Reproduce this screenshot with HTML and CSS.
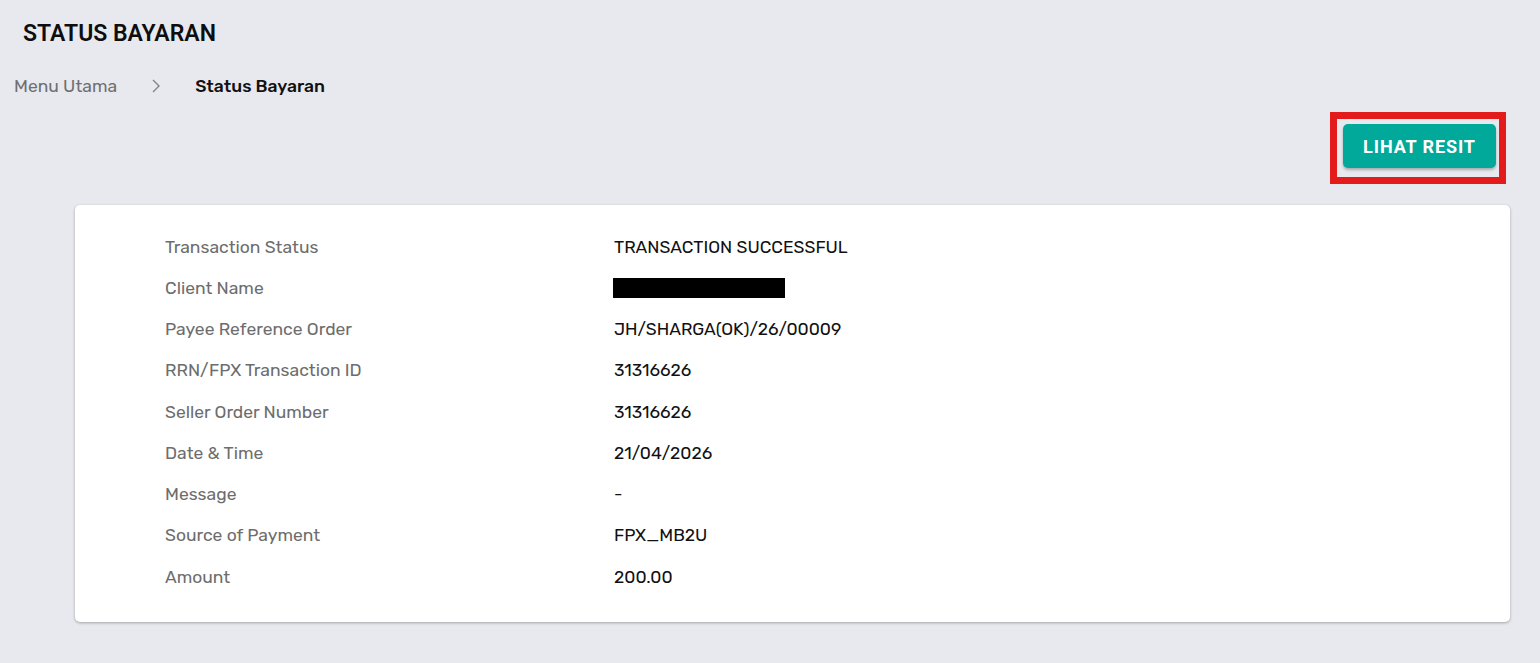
FILE: index.html
```html
<!DOCTYPE html>
<html lang="ms">
<head>
<meta charset="utf-8">
<title>Status Bayaran</title>
<link rel="stylesheet" href="styles.css">
</head>
<body>
<div class="page">
  <h1 class="title">STATUS BAYARAN</h1>
  <nav class="crumbs">
    <span class="crumb-link">Menu Utama</span>
    <svg class="chev" width="12" height="16" viewBox="0 0 12 16"><path d="M3 2 L9 8 L3 14" fill="none" stroke="#80858c" stroke-width="1.4"/></svg>
    <span class="crumb-current">Status Bayaran</span>
  </nav>
  <div class="actions">
    <div class="highlight">
      <button class="btn">LIHAT RESIT</button>
    </div>
  </div>
  <section class="card">
    <dl class="details">
      <dt>Transaction Status</dt><dd>TRANSACTION SUCCESSFUL</dd>
      <dt>Client Name</dt><dd><span class="redact"></span></dd>
      <dt>Payee Reference Order</dt><dd>JH/SHARGA(OK)/26/00009</dd>
      <dt>RRN/FPX Transaction ID</dt><dd>31316626</dd>
      <dt>Seller Order Number</dt><dd>31316626</dd>
      <dt>Date &amp; Time</dt><dd>21/04/2026</dd>
      <dt>Message</dt><dd>-</dd>
      <dt>Source of Payment</dt><dd>FPX_MB2U</dd>
      <dt>Amount</dt><dd>200.00</dd>
    </dl>
  </section>
</div>
</body>
</html>
```

FILE: styles.css
```css
html, body {
  margin: 0;
  padding: 0;
  background: #e8e9ee;
  font-family: "Rubik", "Open Sans", "Noto Sans", "Liberation Sans", sans-serif;
  color: #111;
}
.page {
  padding: 20px 30px 40px 0;
}
.title {
  margin: 0 0 0 23px;
  font-family: "Roboto", "Liberation Sans", sans-serif;
  font-size: 23px;
  font-weight: 600;
  line-height: 28px;
  color: #0e0e0e;
}
.crumbs {
  display: flex;
  align-items: center;
  margin: 26px 0 0 14px;
  height: 24px;
  font-size: 17.5px;
}
.crumb-link {
  color: #6f6f6f;
}
.chev {
  margin: 0 33px 0 33px;
}
.crumb-current {
  font-weight: 500;
  font-size: 17.5px;
  color: #111;
}
.actions {
  display: flex;
  justify-content: flex-end;
  margin-top: 14px;
  padding-right: 4px;
}
.highlight {
  border: 7px solid #e31b1b;
  padding: 5px 3px 9px 6px;
}
.btn {
  display: block;
  width: 153px;
  height: 44px;
  border: none;
  border-radius: 5px;
  background: #00a99a;
  color: #fff;
  font-family: "Roboto", "Liberation Sans", sans-serif;
  font-weight: 700;
  font-size: 18px;
  letter-spacing: 0.9px;
  box-shadow: 0 2px 3px rgba(0,0,0,0.28);
}
.card {
  margin: 21px 0 0 75px;
  background: #fff;
  border-radius: 5px;
  box-shadow: 0 1px 3px rgba(0,0,0,0.3);
  padding: 21px 90px 25px;
}
.details {
  display: grid;
  grid-template-columns: 449px 1fr;
  grid-auto-rows: 41.25px;
  margin: 0;
  font-size: 17.5px;
  align-items: center;
}
.details dt {
  color: #6d6d6d;
}
.details dd {
  margin: 0;
  color: #111;
}
.redact {
  display: block;
  width: 172px;
  height: 20px;
  background: #000;
  margin-left: -1px;
}
```
